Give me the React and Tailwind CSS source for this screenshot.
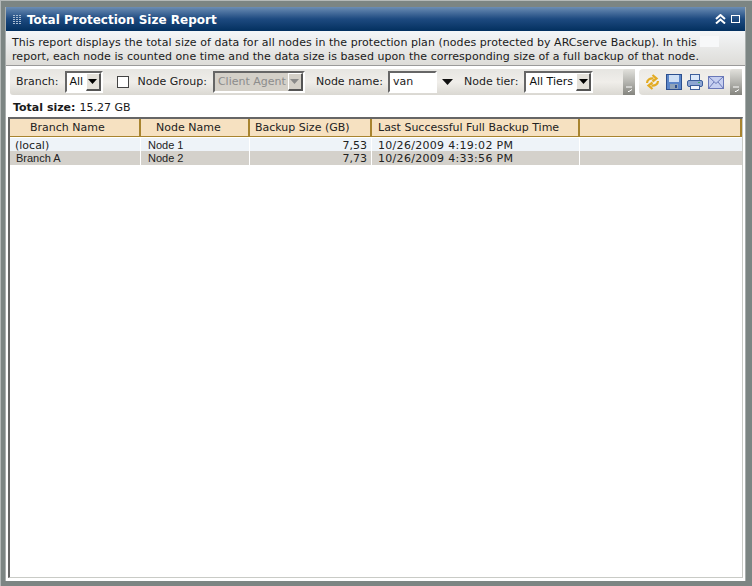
import React from "react";

const font = { fontFamily: '"DejaVu Sans", Verdana, sans-serif' };
const narrow = { fontFamily: '"Liberation Sans", Arial, sans-serif' };

function Arrow({ disabled }) {
  return (
    <span className={`flex h-[18px] w-[15px] items-center justify-center border-t border-l border-r-2 border-b-2 border-t-white border-l-white border-r-[#555] border-b-[#555] ${disabled ? "bg-[#d4d0c8]" : "bg-[#e4e1da]"}`}>
      <svg width="9" height="5" viewBox="0 0 9 5"><path d="M0 0h9L4.5 5z" fill={disabled ? "#8a8a8a" : "#000"} /></svg>
    </span>
  );
}

function Select({ label, width, disabled }) {
  return (
    <span className={`flex h-[22px] items-center justify-between border-2 border-t-[#666] border-l-[#666] border-r-white border-b-white pl-[3px] ${disabled ? "bg-[#d4d0c8] text-[#8c8c8c]" : "bg-white text-[#111]"}`} style={{ width }}>
      <span className="whitespace-nowrap pt-[1px]">{label}</span>
      <Arrow disabled={disabled} />
    </span>
  );
}

function Grip() {
  return (
    <span className="flex h-[26px] w-[12px] items-end justify-center rounded-tl-[3px] bg-gradient-to-b from-[#e2e1dc] via-[#b5b5b0] to-[#85857f] pb-[3px]">
      <svg width="7" height="6" viewBox="0 0 7 6"><path d="M0 1h6M6 3.5L3 5.5H2" stroke="#fff" fill="none" /></svg>
    </span>
  );
}

const cols = ["w-[131px]", "w-[109px]", "w-[122px]", "w-[208px]", "flex-1"];

function HeaderCell({ className, children }) {
  return (
    <div className={`flex h-[18px] items-center border-r-2 border-b border-r-[#a8842f] border-b-[#a8842f] bg-[#f6e1c1] pt-[1px] ${className}`}>
      {children}
    </div>
  );
}

function Row({ bg, h, a, b, c, d, indent, aNarrow }) {
  return (
    <div className={`flex items-start leading-[13px] text-[#222] ${h} ${bg}`}>
      <div className={`${cols[0]} h-full border-r border-r-white pt-[1px] ${indent}`} style={aNarrow ? narrow : undefined}>{a}</div>
      <div className={`${cols[1]} h-full border-r border-r-white pt-[1px] pl-[7px]`} style={narrow}>{b}</div>
      <div className={`${cols[2]} h-full border-r border-r-white pt-[1px] pr-[4px] text-right`}>{c}</div>
      <div className={`${cols[3]} h-full border-r border-r-white pt-[1px] pl-[6px] tracking-[0.3px]`}>{d}</div>
      <div className={`${cols[4]} h-full`} />
    </div>
  );
}

export default function App() {
  return (
    <div style={font} className="flex h-[586px] w-[752px] flex-col overflow-hidden border-t border-l border-t-[#b4b9b8] border-l-[#b4b9b8] bg-[#7c8583] text-[11px] text-[#222]">
      <div className="flex min-h-0 flex-1 flex-col pt-[6px] pl-[4px] pr-[6px] pb-[5px]">
        <div className="flex min-h-0 flex-1 flex-col border-l border-r border-[#a9aead] bg-white">
          {/* Title bar */}
          <div className="flex h-[24px] shrink-0 items-center justify-between bg-gradient-to-b from-[#6b8db4] via-[#1d4a80] to-[#03305f] pl-[7px] pr-[5px]">
            <div className="flex items-center gap-[6px]">
              <svg width="8" height="9" viewBox="0 0 8 9" fill="#a9bcd2">
                <path d="M0 0h2v1H0zM3 0h2v1H3zM6 0h2v1H6zM0 2h2v1H0zM3 2h2v1H3zM6 2h2v1H6zM0 4h2v1H0zM3 4h2v1H3zM6 4h2v1H6zM0 6h2v1H0zM3 6h2v1H3zM6 6h2v1H6zM0 8h2v1H0zM3 8h2v1H3zM6 8h2v1H6z" />
              </svg>
              <span className="pt-[1px] text-[12px] font-bold leading-none text-white">Total Protection Size Report</span>
            </div>
            <div className="flex items-center gap-[5px]">
              <svg width="11" height="10" viewBox="0 0 11 10" fill="none" stroke="#fff" strokeWidth="2">
                <path d="M1 5l4.5-4L10 5M1 9.5l4.5-4 4.5 4" />
              </svg>
              <span className="h-[8px] w-[9px] border border-white" />
            </div>
          </div>

          {/* Description */}
          <div className="relative h-[35px] shrink-0 border-b border-b-[#9a9a9a] bg-gradient-to-b from-[#f4f6f8] to-[#dddcd8] pt-[5px] pl-[6px] leading-[14px] tracking-[0.05px] whitespace-nowrap text-[#1a1a1a]">
            <div>This report displays the total size of data for all nodes in the protection plan (nodes protected by ARCserve Backup). In this</div>
            <div>report, each node is counted one time and the data size is based upon the corresponding size of a full backup of that node.</div>
            <span className="absolute top-[5px] left-[694px] h-[11px] w-[19px] bg-[#f7f8f9]" />
          </div>

          {/* Toolbar */}
          <div className="mt-[3px] mr-[3px] ml-[4px] flex h-[26px] shrink-0 items-center gap-[4px] text-[#222]">
            <div className="flex h-full flex-1 items-center rounded-l-[3px] bg-gradient-to-b from-[#e6e5e1] via-[#f0eeea] to-[#dad8d2] pl-[6px]">
              <span className="pt-[1px]">Branch:</span>
              <span className="ml-[6px]"><Select label="All" width="38px" /></span>
              <span className="ml-[14px] h-[12px] w-[12px] border border-[#444] bg-white" />
              <span className="ml-[9px] pt-[1px]">Node Group:</span>
              <span className="ml-[6px]"><Select label="Client Agent" width="92px" disabled /></span>
              <span className="ml-[11px] pt-[1px]">Node name:</span>
              <span className="ml-[5px] flex h-[22px] w-[49px] items-center border-2 border-t-[#666] border-l-[#666] border-r-white border-b-white bg-white pt-[1px] pl-[3px]">van</span>
              <svg className="ml-[5px]" width="11" height="6" viewBox="0 0 11 6"><path d="M0 0h11L5.5 6z" fill="#111" /></svg>
              <span className="ml-[11px] pt-[1px]">Node tier:</span>
              <span className="ml-[6px]"><Select label="All Tiers" width="69px" /></span>
              <span className="ml-auto"><Grip /></span>
            </div>
            <div className="flex h-full w-[103px] shrink-0 items-center rounded-l-[4px] bg-gradient-to-b from-[#eceae6] via-[#f2f0ec] to-[#dedcd6] pl-[6px]">
              <svg width="15" height="16" viewBox="0 0 15 16" fill="none" stroke="#e3ab22" strokeWidth="2.2">
                <path d="M2 9c0-3 3-5 6.5-4.5M7.5 1l4 3.5-4 3M13 7c0 3-3 5-6.5 4.5M7.5 15l-4-3.5 4-3" />
              </svg>
              <svg className="ml-[6px]" width="16" height="16" viewBox="0 0 16 16">
                <rect x=".5" y=".5" width="15" height="15" fill="#5b86c9" stroke="#2c4f8e" />
                <rect x="3" y="1" width="10" height="7" fill="#cfe0f5" />
                <rect x="4" y="10" width="8" height="5" fill="#8fa3b8" />
                <rect x="9" y="11" width="2" height="3" fill="#2c4f8e" />
              </svg>
              <svg className="ml-[5px]" width="16" height="16" viewBox="0 0 16 16">
                <rect x="3.5" y=".5" width="9" height="7" fill="#dbe8fa" stroke="#3d5f9c" />
                <rect x=".5" y="6.5" width="15" height="6" rx="1.5" fill="#8ea6d2" stroke="#3d5f9c" />
                <rect x="3.5" y="11.5" width="9" height="4" fill="#f2f5fb" stroke="#3d5f9c" />
                <rect x="11" y="8" width="2" height="1" fill="#3fae6b" />
              </svg>
              <svg className="ml-[5px]" width="16" height="13" viewBox="0 0 16 13">
                <rect x=".5" y=".5" width="15" height="12" fill="#c6cff0" stroke="#6a78b8" />
                <path d="M.5.5L8 7.5 15.5.5M.5 12.5L6 6M15.5 12.5L10 6" fill="none" stroke="#6a78b8" />
              </svg>
              <span className="ml-auto"><Grip /></span>
            </div>
          </div>

          {/* Total size */}
          <div className="flex h-[22px] shrink-0 items-center pl-[7px] pt-[5px] text-[#1a1a1a]">
            <b>Total size:</b>
            <span className="ml-[4px]">15.27 GB</span>
          </div>

          {/* Table */}
          <div className="mb-[3px] ml-[2px] mr-[2px] flex min-h-0 flex-1 flex-col border-t-2 border-l-2 border-r border-b border-t-[#666] border-l-[#666] border-r-[#c9cbc6] border-b-[#c9cbc6]">
            <div className="flex text-[#222]">
              <HeaderCell className={`${cols[0]} pl-[20px]`}>Branch Name</HeaderCell>
              <HeaderCell className={`${cols[1]} pl-[15px]`}>Node Name</HeaderCell>
              <HeaderCell className={`${cols[2]} pl-[5px]`}>Backup Size (GB)</HeaderCell>
              <HeaderCell className={`${cols[3]} pl-[6px]`}>Last Successful Full Backup Time</HeaderCell>
              <HeaderCell className={cols[4]} />
            </div>
            <div className="pt-[1px]">
              <Row bg="bg-[#eef3f8]" h="h-[13px]" a="(local)" b="Node 1" c="7,53" d="10/26/2009 4:19:02 PM" indent="pl-[5px]" />
              <Row bg="bg-[#d4d1cb]" h="h-[14px]" a="Branch A" b="Node 2" c="7,73" d="10/26/2009 4:33:56 PM" indent="pl-[6px]" aNarrow />
            </div>
          </div>
        </div>
      </div>
    </div>
  );
}
